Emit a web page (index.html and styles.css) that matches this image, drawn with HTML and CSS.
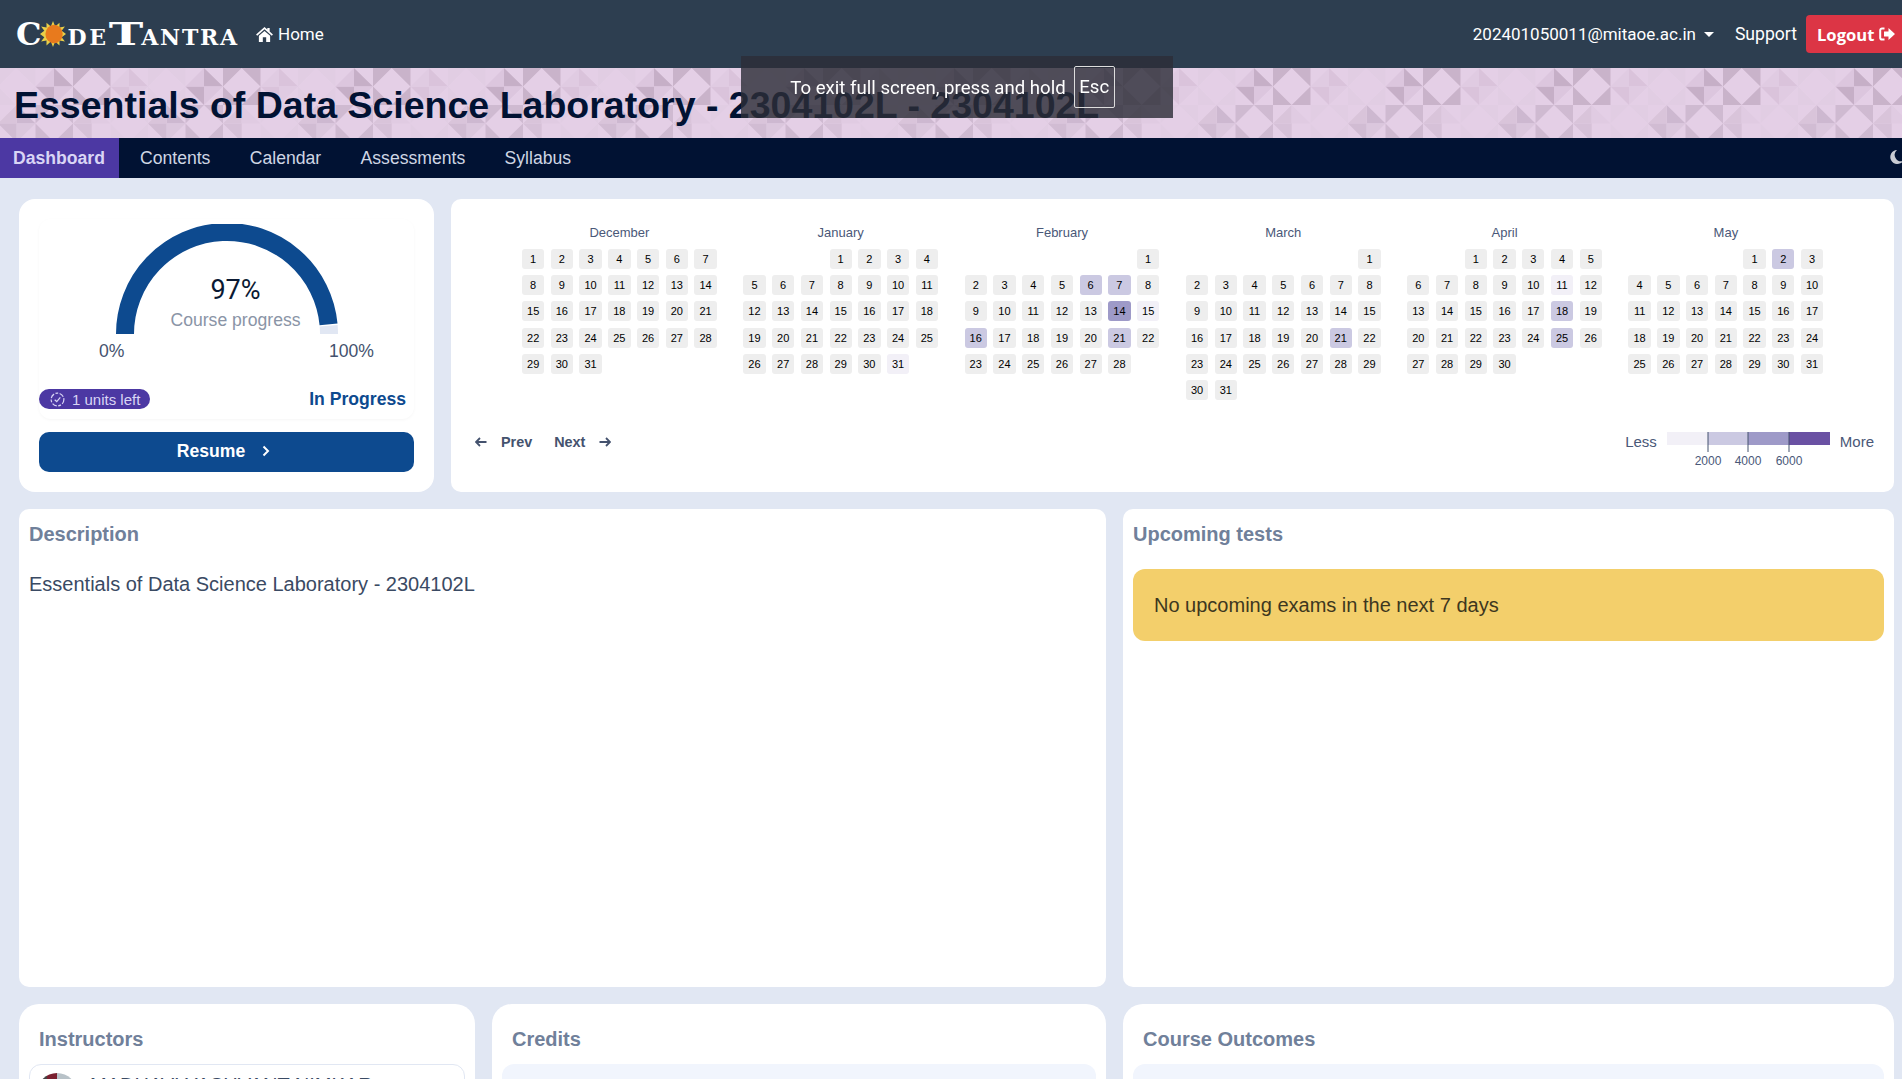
FILE: index.html
```html
<!DOCTYPE html>
<html lang="en">
<head>
  <meta charset="UTF-8">
  <meta name="viewport" content="width=device-width, initial-scale=1.0">
  <title>Essentials of Data Science Laboratory - CodeTantra</title>
  <link rel="stylesheet" href="styles.css">
</head>
<body>
  <nav class="topbar">
    <a class="logo">
      <span class="logo-big logo-c">C</span>
      <svg class="sun" viewBox="0 0 24 24" width="26" height="26">
        <polygon points="12,0 14,5 18,1.5 18,6 23,5 20,9 24,12 20,15 23,19 18,18 18,22.5 14,19 12,24 10,19 6,22.5 6,18 1,19 4,15 0,12 4,9 1,5 6,6 6,1.5 10,5" fill="#e9cf48"/>
        <ellipse cx="13" cy="12" rx="8" ry="8.5" fill="#e87a1d"/>
      </svg>
      <span class="logo-small logo-de">DE</span><span class="logo-big logo-t">T</span><span class="logo-small">ANTRA</span>
    </a>
    <a class="home-link">
      <svg viewBox="0 0 18 16" width="17" height="15"><path d="M9 0 L12 2.6 V1 H14.5 V4.8 L18 8 L16.8 9.2 L9 2.4 L1.2 9.2 L0 8 Z M3 9.4 L9 4.2 L15 9.4 V16 H10.8 V11 H7.2 V16 H3 Z" fill="#fff"/></svg>
      Home
    </a>
    <div class="topbar-right">
      <a class="user-menu">202401050011@mitaoe.ac.in<span class="caret"></span></a>
      <a class="support-link">Support</a>
      <button class="logout-btn">Logout
        <svg viewBox="0 0 16 14" width="16" height="14"><path d="M5.5 1.5 H3 A1.8 1.8 0 0 0 1.2 3.3 V10.7 A1.8 1.8 0 0 0 3 12.5 H5.5" fill="none" stroke="#fff" stroke-width="2"/><path d="M9.5 1 L16 7 L9.5 13 V9.6 H5 V4.4 H9.5 Z" fill="#fff"/></svg>
      </button>
    </div>
  </nav>

  <header class="banner">
    <svg class="banner-pattern" width="100%" height="100%">
      <defs>
        <pattern id="quilt" x="73" y="0" width="150" height="74" patternUnits="userSpaceOnUse">
          <!-- row 1 -->
          <path d="M0 0H18.7L0 18.5Z M18.7 0H37.5V18.5Z M0 18.5V37L18.7 37Z M37.5 18.5V37H18.7Z" fill="#c9b3ca"/>
          <path d="M56 0 L75 18.5 H56Z M37.5 18.5 H56 V37Z" fill="#dac3db"/>
          <path d="M37.5 18.5 L56 0 V18.5Z M56 18.5 H75 L56 37Z" fill="#e0cbe2"/>
          <path d="M75 0H93L75 18.5Z M112.5 0V18.5L93 0Z M75 18.5V37H93Z M112.5 18.5V37H93Z" fill="#e1cde3"/>
          <path d="M131 0 L150 18.5 H131Z M112.5 18.5 H131 V37Z" fill="#c6afc7"/>
          <path d="M112.5 18.5 L131 0 V18.5Z M131 18.5 H150 L131 37Z" fill="#dcc6de"/>
          <!-- row 2 -->
          <path d="M112.5 37H131L112.5 55.5Z M150 37V55.5L131 37Z M112.5 55.5V74H131Z M150 55.5V74H131Z" fill="#cfbad1"/>
          <path d="M93.7 37 L112.5 55.5 H93.7Z" fill="#cdb8d0"/>
          <path d="M75 55.5 L93.7 37 V55.5Z" fill="#d9c4da"/>
          <path d="M75 55.5 H93.7 V74Z" fill="#d1bcd3"/>
          <path d="M93.7 55.5 H112.5 L93.7 74Z" fill="#dbc7dd"/>
          <path d="M37.5 37H56L37.5 55.5Z M75 37V55.5L56 37Z M37.5 55.5V74H56Z M75 55.5V74H56Z" fill="#e1cde3"/>
          <path d="M18.7 37 V55.5 H0Z" fill="#d9c4da"/>
          <path d="M18.7 37 L37.5 55.5 H18.7Z" fill="#e0cbe2"/>
          <path d="M0 55.5 H18.7 V74Z" fill="#d6c1d8"/>
        </pattern>
      </defs>
      <rect width="100%" height="100%" fill="url(#quilt)"/>
    </svg>
    <h1>Essentials of Data Science Laboratory - 2304102L - 2304102L</h1>
  </header>

  <nav class="tabs">
    <a class="tab active">Dashboard</a>
    <a class="tab">Contents</a>
    <a class="tab">Calendar</a>
    <a class="tab">Assessments</a>
    <a class="tab">Syllabus</a>
    <svg class="moon" viewBox="0 0 16 16" width="16" height="16"><path d="M9 1 A7 7 0 1 0 15 12 A6.4 6.4 0 0 1 9 1 Z" fill="#c9ccd4"/></svg>
  </nav>

  <main class="page">
    <section class="row row-top">
      <div class="card progress-card">
        <div class="progress-box">
          <div class="gauge">
            <svg viewBox="0 0 226 110" width="226" height="110">
              <path d="M214.66 101.65 A102 102 0 0 1 215 110" fill="none" stroke="#e1e7f3" stroke-width="18"/>
              <path d="M11 110 A102 102 0 0 1 214.55 100.4" fill="none" stroke="#0d4a8f" stroke-width="18"/>
            </svg>
            <div class="gauge-center">
              <div class="gauge-value">97%</div>
              <div class="gauge-label">Course progress</div>
            </div>
          </div>
          <div class="gauge-ends"><span>0%</span><span>100%</span></div>
          <div class="status-row">
            <span class="units-badge">
              <svg viewBox="0 0 16 16" width="15" height="15"><circle cx="8" cy="8" r="6.8" fill="none" stroke="#d9d5f5" stroke-width="1.3" stroke-dasharray="5 1.6 3 1.6"/><path d="M5 8.2 L7.2 10.2 L11 5.8" fill="none" stroke="#d9d5f5" stroke-width="1.3"/></svg>
              1 units left
            </span>
            <span class="status-text">In Progress</span>
          </div>
        </div>
        <button class="resume-btn">Resume
          <svg viewBox="0 0 8 12" width="8" height="12"><path d="M1.5 1.5 L6 6 L1.5 10.5" fill="none" stroke="#fff" stroke-width="2"/></svg>
        </button>
      </div>

      <div class="card calendar-card">
        <div class="months" id="months"></div>
        <div class="calendar-footer">
          <div class="pager">
            <a class="pager-link">
              <svg viewBox="0 0 12 10" width="12" height="10"><path d="M5 1 L1 5 L5 9 M1 5 H11.5" fill="none" stroke="#44526e" stroke-width="1.8"/></svg>
              <span>Prev</span>
            </a>
            <a class="pager-link">
              <span>Next</span>
              <svg viewBox="0 0 12 10" width="12" height="10"><path d="M7 1 L11 5 L7 9 M11 5 H0.5" fill="none" stroke="#44526e" stroke-width="1.8"/></svg>
            </a>
          </div>
          <div class="legend">
            <span>Less</span>
            <svg class="legend-scale" viewBox="0 0 163 36" width="163" height="36">
              <rect x="0" y="0" width="41" height="13" fill="#f2f0f7"/>
              <rect x="41" y="0" width="40" height="13" fill="#cbc9e2"/>
              <rect x="81" y="0" width="41" height="13" fill="#9e9ac8"/>
              <rect x="122" y="0" width="41" height="13" fill="#6a51a3"/>
              <path d="M41 0V20 M81 0V20 M122 0V20" stroke="#44526e" stroke-width="1"/>
              <text x="41" y="33">2000</text>
              <text x="81" y="33">4000</text>
              <text x="122" y="33">6000</text>
            </svg>
            <span>More</span>
          </div>
        </div>
      </div>
    </section>

    <section class="row row-middle">
      <div class="card text-card">
        <h2 class="card-title">Description</h2>
        <p class="description">Essentials of Data Science Laboratory - 2304102L</p>
      </div>
      <div class="card text-card">
        <h2 class="card-title">Upcoming tests</h2>
        <div class="exam-alert">No upcoming exams in the next 7 days</div>
      </div>
    </section>

    <section class="row row-bottom">
      <div class="card info-card">
        <h2 class="card-title">Instructors</h2>
        <div class="instructor">
          <div class="avatar"></div>
          <div class="instructor-name">MADHAVI YASHVANT NIMKAR</div>
        </div>
      </div>
      <div class="card info-card">
        <h2 class="card-title">Credits</h2>
        <div class="info-panel"></div>
      </div>
      <div class="card info-card">
        <h2 class="card-title">Course Outcomes</h2>
        <div class="info-panel"></div>
      </div>
    </section>
  </main>

  <div class="fullscreen-toast">
    <span>To exit full screen, press and hold</span>
    <kbd>Esc</kbd>
  </div>

  <script src="heatmap.js"></script>
</body>
</html>
```

FILE: styles.css
```css
html, body {
  height: 100%;
}
body {
  font-family: "Liberation Sans", Arial, sans-serif;
  margin: 0;
  padding: 0;
  background: #e1e7f3;
  overflow: hidden;
}
h1, h2, p {
  margin: 0;
}

/* top bar */
.topbar {
  height: 68px;
  background: #2d3e50;
  color: #fff;
  display: flex;
  align-items: center;
  padding-left: 16px;
  overflow: hidden;
}
.logo {
  display: flex;
  align-items: center;
  width: 221px;
  height: 34px;
  font-family: "DejaVu Serif", serif;
  font-weight: 700;
  color: #fff;
  line-height: 34px;
}
.logo-big {
  font-size: 32px;
}
.logo-c {
  letter-spacing: -2px;
}
.logo-small {
  font-size: 22px;
  padding-top: 6px;
  letter-spacing: 1.7px;
}
.logo-de {
  letter-spacing: 2.6px;
}
.logo-t {
  margin: 0 4px 0 5px;
  transform: scaleX(1.45);
}
.sun {
  flex: none;
  margin: 0 1px 0 1px;
}
.home-link {
  display: flex;
  align-items: center;
  gap: 5px;
  margin-left: 19px;
  font-size: 17px;
  font-family: Roboto, sans-serif;
}
.topbar-right {
  margin-left: auto;
  margin-right: -6px;
  display: flex;
  align-items: center;
  font-family: Roboto, sans-serif;
  font-size: 17px;
}
.user-menu {
  display: flex;
  align-items: center;
}
.caret {
  width: 0;
  height: 0;
  margin-left: 8px;
  border-left: 5px solid transparent;
  border-right: 5px solid transparent;
  border-top: 5px solid #fff;
}
.support-link {
  margin: 0 9px 0 21px;
  font-size: 17.6px;
}
.logout-btn {
  width: 102px;
  height: 38px;
  display: flex;
  align-items: center;
  gap: 5px;
  padding: 0 0 0 11px;
  background: #dc3545;
  border: 0;
  border-radius: 4px;
  color: #fff;
  font-family: "Open Sans", sans-serif;
  font-size: 16.6px;
  font-weight: 700;
}

/* course banner */
.banner {
  position: relative;
  height: 70px;
  background: #e4cfe6;
  overflow: hidden;
}
.banner-pattern {
  position: absolute;
  top: 0;
  left: 0;
}
.banner h1 {
  position: relative;
  padding: 15px 0 0 14px;
  font-size: 37.5px;
  line-height: 44px;
  color: #011233;
  white-space: nowrap;
}

/* tabs */
.tabs {
  height: 40px;
  background: #011233;
  display: flex;
  align-items: stretch;
}
.tab {
  display: flex;
  align-items: center;
  padding: 0 19.7px;
  font-size: 17.6px;
  color: #cfd6e4;
}
.tab.active {
  width: 119px;
  box-sizing: border-box;
  padding: 0 13px;
  background: #4c38a3;
  color: #d9d5f5;
  font-weight: 700;
}
.tab.active + .tab {
  padding-left: 21px;
}
.moon {
  margin: 11px -2px 0 auto;
}

/* rows and cards */
.page {
  padding: 21px 8px 0 19px;
}
.row {
  display: grid;
  gap: 17px;
  margin-bottom: 17px;
}
.row-top {
  grid-template-columns: 415px 1fr;
  height: 293px;
}
.row-middle {
  grid-template-columns: 1087px 1fr;
  height: 478px;
}
.row-bottom {
  grid-template-columns: 456px 614px 1fr;
  height: 300px;
}
.card {
  background: #fff;
  border-radius: 10px;
}
.card-title {
  font-size: 20px;
  line-height: 24px;
  color: #70809a;
}

/* progress card */
.progress-card {
  border-radius: 16px;
  padding: 20px;
  display: flex;
  flex-direction: column;
  gap: 13px;
}
.progress-box {
  height: 200px;
  border-radius: 12px;
  box-shadow: 0 1px 3px rgba(0, 0, 0, 0.04);
  display: flex;
  flex-direction: column;
}
.gauge {
  position: relative;
  width: 226px;
  height: 110px;
  margin: 5px auto 0;
}
.gauge svg {
  display: block;
}
.gauge-center {
  position: absolute;
  left: 18px;
  right: 0;
  top: 48px;
  text-align: center;
}
.gauge-value {
  font-family: Roboto, sans-serif;
  font-size: 27px;
  line-height: 36px;
  color: #0b1a33;
}
.gauge-label {
  margin-top: 1px;
  font-size: 17.6px;
  line-height: 22px;
  color: #8a94a6;
}
.gauge-ends {
  display: flex;
  justify-content: space-between;
  padding: 6px 40px 0 60px;
  font-size: 17.6px;
  line-height: 22px;
  color: #44526e;
}
.status-row {
  margin-top: auto;
  padding: 0 8px 10px 0;
  display: flex;
  justify-content: space-between;
  align-items: center;
}
.units-badge {
  display: flex;
  align-items: center;
  gap: 7px;
  height: 20px;
  padding: 0 10px 0 11px;
  border-radius: 10px;
  background: #4c38a3;
  color: #d9d5f5;
  font-size: 15px;
}
.status-text {
  font-size: 17.6px;
  line-height: 20px;
  font-weight: 700;
  color: #0d4a8f;
}
.resume-btn {
  height: 40px;
  display: flex;
  align-items: center;
  justify-content: center;
  gap: 17px;
  padding: 0 6px 2px 0;
  background: #0d4a8f;
  border: 0;
  border-radius: 10px;
  color: #fff;
  font-family: "Liberation Sans", Arial, sans-serif;
  font-size: 17.6px;
  font-weight: 700;
}

/* calendar heatmap */
.calendar-card {
  padding: 26px 20px 24px 24px;
  display: flex;
  flex-direction: column;
}
.months {
  display: flex;
  gap: 26.5px;
  padding-left: 47px;
}
.month {
  width: 194.8px;
}
.month-name {
  height: 15px;
  margin-bottom: 9px;
  font-size: 13px;
  line-height: 15px;
  text-align: center;
  color: #4a5878;
}
.month-days {
  display: grid;
  grid-template-columns: repeat(7, 22.3px);
  grid-auto-rows: 20px;
  column-gap: 6.45px;
  row-gap: 6.2px;
}
.day {
  display: flex;
  align-items: center;
  justify-content: center;
  border-radius: 3px;
  background: #eeeeee;
  font-size: 11px;
  color: #000;
}
.day.level-1 {
  background: #f2f0f7;
}
.day.level-2 {
  background: #cbc9e2;
}
.day.level-3 {
  background: #9e9ac8;
}
.calendar-footer {
  margin-top: auto;
  display: flex;
  justify-content: space-between;
  align-items: flex-start;
}
.pager {
  display: flex;
  gap: 22px;
  height: 20px;
}
.pager-link {
  display: flex;
  align-items: center;
  gap: 14px;
  font-size: 14.4px;
  font-weight: 700;
  color: #44526e;
}
.legend {
  display: flex;
  align-items: flex-start;
  gap: 10px;
  font-size: 15px;
  line-height: 20px;
  color: #4a5878;
}
.legend-scale text {
  font-family: "Liberation Sans", Arial, sans-serif;
  font-size: 12px;
  text-anchor: middle;
  fill: #4a5878;
}

/* description and tests */
.text-card {
  padding: 13px 10px;
}
.description {
  margin-top: 26px;
  font-size: 20px;
  line-height: 24px;
  color: #3a4a63;
}
.exam-alert {
  margin-top: 23px;
  height: 72px;
  display: flex;
  align-items: center;
  padding-left: 21px;
  border-radius: 12px;
  background: #f3cf6b;
  font-size: 20px;
  color: #3d3720;
}

/* bottom row */
.info-card {
  border-radius: 20px;
  padding: 23px 10px;
}
.info-card .card-title {
  padding-left: 10px;
}
.instructor {
  margin-top: 13px;
  height: 90px;
  border: 1px solid #e1e7f3;
  border-radius: 12px;
  padding: 8px 7px;
  display: flex;
  gap: 13px;
}
.avatar {
  flex: none;
  width: 40px;
  height: 40px;
  border-radius: 50%;
  background: linear-gradient(90deg, #444 0 24%, #7a2030 24% 50%, #b8c2c8 50%);
}
.instructor-name {
  font-size: 20px;
  line-height: 24px;
  color: #3a4a63;
}
.info-panel {
  margin-top: 13px;
  height: 90px;
  border-radius: 12px;
  background: #f1f5fd;
}

/* browser full screen hint */
.fullscreen-toast {
  position: fixed;
  top: 56px;
  left: 741px;
  width: 432px;
  height: 62px;
  display: flex;
  align-items: center;
  justify-content: center;
  gap: 8px;
  padding: 1px 9px 0 0;
  box-sizing: border-box;
  background: rgba(44, 46, 55, 0.81);
  color: #fff;
  font-family: Roboto, sans-serif;
  font-size: 18.6px;
}
.fullscreen-toast kbd {
  width: 41px;
  height: 42px;
  margin-top: -1px;
  box-sizing: border-box;
  display: flex;
  align-items: center;
  justify-content: center;
  border: 1px solid #ddd;
  border-radius: 2px;
  font-family: Roboto, sans-serif;
}
```

FILE: heatmap.js
```js
// first weekday of each month (0 = first column) and the days with activity
const MONTHS = [
  { name: "December", start: 0, days: 31, levels: {} },
  { name: "January", start: 3, days: 31, levels: { 31: 1 } },
  { name: "February", start: 6, days: 28, levels: { 6: 2, 7: 2, 14: 3, 15: 1, 16: 2, 21: 2 } },
  { name: "March", start: 6, days: 31, levels: { 21: 2 } },
  { name: "April", start: 2, days: 30, levels: { 11: 1, 18: 2, 25: 2 } },
  { name: "May", start: 4, days: 31, levels: { 2: 2 } }
];

const container = document.getElementById("months");

MONTHS.forEach(month => {
  const box = document.createElement("div");
  box.classList.add("month");
  box.innerHTML = `<div class="month-name">${month.name}</div>`;

  const grid = document.createElement("div");
  grid.classList.add("month-days");
  for (let i = 0; i < month.start; i++) {
    grid.appendChild(document.createElement("span"));
  }
  for (let d = 1; d <= month.days; d++) {
    const cell = document.createElement("div");
    cell.classList.add("day");
    if (month.levels[d]) cell.classList.add("level-" + month.levels[d]);
    cell.textContent = d;
    grid.appendChild(cell);
  }

  box.appendChild(grid);
  container.appendChild(box);
});
```
